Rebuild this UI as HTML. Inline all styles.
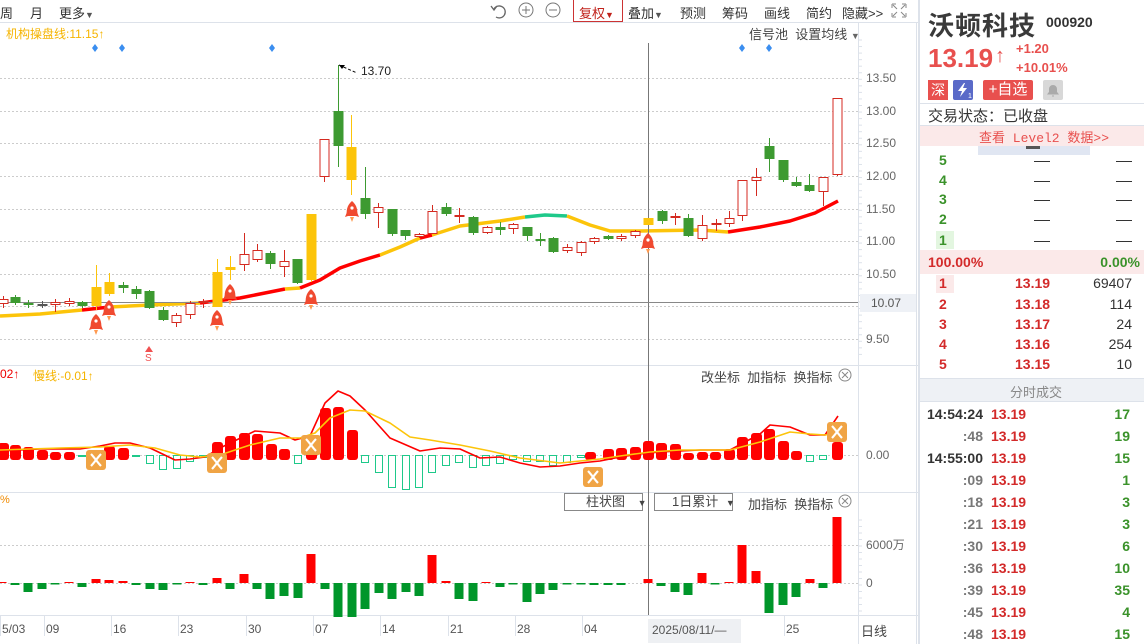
<!DOCTYPE html>
<html><head><meta charset="utf-8">
<style>
*{margin:0;padding:0;box-sizing:border-box}
body{width:1144px;height:644px;overflow:hidden;background:#fff;font-family:"Liberation Sans","Noto Sans CJK SC",sans-serif;position:relative;color:#333}
.a{position:absolute;white-space:nowrap}
.tb{font-size:13px;color:#333}
.rp .r{color:#d32a2a}.rp .g{color:#3a922a}
</style></head><body>
<svg id="s" class="a" style="left:0;top:0" width="920" height="644" xmlns="http://www.w3.org/2000/svg" font-family="Liberation Sans, Noto Sans CJK SC, sans-serif"></svg>

<div class="a" style="left:0;top:0;width:918px;height:23px;border-bottom:1px solid #dde2ea"></div>
<div class="a tb" style="left:0;top:3px">周</div>
<div class="a tb" style="left:30px;top:3px">月</div>
<div class="a tb" style="left:59px;top:3px">更多<span style="font-size:9px;color:#555">▼</span></div>
<div class="a" style="left:573px;top:0;width:50px;height:22px;border:1px solid #c33;border-top:none"></div>
<div class="a tb" style="left:579px;top:3px;color:#c0211a">复权<span style="font-size:9px">▼</span></div>
<div class="a tb" style="left:628px;top:3px">叠加<span style="font-size:9px;color:#555">▼</span></div>
<div class="a tb" style="left:680px;top:3px">预测</div>
<div class="a tb" style="left:722px;top:3px">筹码</div>
<div class="a tb" style="left:764px;top:3px">画线</div>
<div class="a tb" style="left:806px;top:3px">简约</div>
<div class="a tb" style="left:842px;top:3px">隐藏&gt;&gt;</div>

<div class="a" style="left:6px;top:25px;font-size:12px;color:#f5b400">机构操盘线:11.15↑</div>
<div class="a" style="left:749px;top:24px;font-size:13px;color:#444">信号池&nbsp; 设置均线 <span style="font-size:9px;color:#666">▼</span></div>

<div class="a" style="left:0;top:367px;font-size:12px;color:#e00">02↑</div>
<div class="a" style="left:33px;top:367px;font-size:12px;color:#f5b400">慢线:-0.01↑</div>
<div class="a" style="left:701px;top:367px;font-size:13px;color:#444">改坐标&nbsp; 加指标&nbsp; 换指标</div>
<div class="a" style="left:0;top:494px;font-size:11px;color:#f08a00">%</div>
<div class="a" style="left:564px;top:493px;width:79px;height:18px;border:1px solid #888;font-size:13px;color:#444;padding-left:21px;line-height:16px">柱状图 <span style="font-size:9px;margin-left:9px">▼</span></div>
<div class="a" style="left:654px;top:493px;width:79px;height:18px;border:1px solid #888;font-size:13px;color:#444;padding-left:17px;line-height:16px">1日累计 <span style="font-size:9px;margin-left:4px">▼</span></div>
<div class="a" style="left:748px;top:494px;font-size:13px;color:#444">加指标&nbsp; 换指标</div>
<div class="a" style="left:648px;top:619px;width:93px;height:24px;background:#eef0f3"></div>
<div class="a" style="left:652px;top:623px;font-size:12px;color:#555">2025/08/11/—</div>
<div class="a" style="left:861px;top:621px;font-size:13px;color:#444">日线</div>

<div class="a" style="left:918px;top:0;width:2px;height:644px;background:#dde2ea"></div>
<div class="a" style="left:928px;top:6px;font-size:26px;font-weight:bold;color:#3a3a3a;letter-spacing:1px">沃顿科技</div>
<div class="a" style="left:1046px;top:14px;font-size:14px;font-weight:bold;color:#333">000920</div>
<div class="a" style="left:928px;top:43px;font-size:26px;font-weight:bold;color:#e8504e">13.19</div>
<div class="a" style="left:995px;top:45px;font-size:20px;font-weight:bold;color:#e8504e">↑</div>
<div class="a" style="left:1016px;top:41px;font-size:13px;font-weight:bold;color:#e8504e">+1.20</div>
<div class="a" style="left:1016px;top:60px;font-size:13px;font-weight:bold;color:#e8504e">+10.01%</div>
<div class="a" style="left:928px;top:80px;width:20px;height:20px;background:#e8504e;color:#fff;font-size:14px;text-align:center;line-height:20px">深</div>
<div class="a" style="left:953px;top:80px;width:20px;height:20px;background:#5a6ac8;border-radius:2px"><svg width="20" height="20"><path d="M11 3L5 11h4l-2 6 7-9h-4l2-5z" fill="#fff"/><text x="15" y="18" font-size="7" fill="#fff">1</text></svg></div>
<div class="a" style="left:983px;top:80px;width:50px;height:20px;background:#e8504e;color:#fff;font-size:15px;text-align:center;line-height:20px;border-radius:2px">+自选</div>
<div class="a" style="left:1043px;top:80px;width:20px;height:20px;background:#d8d8d8;border-radius:2px"><svg width="20" height="20"><path d="M5 14h10l-1.5-2V9a3.5 3.5 0 0 0-7 0v3z M9 16h2" fill="#aaa" stroke="#aaa"/></svg></div>
<div class="a" style="left:920px;top:103px;width:224px;height:1px;background:#dde2ea"></div>
<div class="a" style="left:928px;top:105px;font-size:15px;color:#333">交易状态：已收盘</div>
<div class="a" style="left:920px;top:125px;width:224px;height:21px;background:#fbe9e9;border-top:1px solid #dde2ea"></div>
<div class="a" style="left:979px;top:127px;font-size:13px;color:#e8504e;font-family:'Liberation Mono','Noto Sans CJK SC',monospace">查看 Level2 数据&gt;&gt;</div>
<div class="a" style="left:978px;top:146px;width:112px;height:9px;background:#e0e6f2"></div>
<div class="a" style="left:1026px;top:146px;width:14px;height:3px;background:#555"></div>
<div class="a" style="left:936px;top:231px;width:18px;height:18px;background:#e3f6e0"></div>
<div class="a" style="left:920px;top:250px;width:224px;height:24px;background:#fbe9e9"></div>
<div class="a" style="left:936px;top:275px;width:18px;height:18px;background:#fbe9e9"></div>
<div class="a" style="left:920px;top:378px;width:224px;height:24px;background:#eef1f5;border-top:1px solid #dde2ea;border-bottom:1px solid #dde2ea"></div>
<div class="a" style="left:1010px;top:382px;font-size:13px;color:#888">分时成交</div>
<div id="rp" class="a rp" style="left:0;top:0;width:1144px;height:644px;font-size:14px;font-weight:bold"></div>

<script>
var S=document.getElementById('s'),h='';
function L(x1,y1,x2,y2,c,w,d){h+='<line x1="'+x1+'" y1="'+y1+'" x2="'+x2+'" y2="'+y2+'" stroke="'+c+'" stroke-width="'+(w||1)+'"'+(d?' stroke-dasharray="'+d+'"':'')+'/>';}
function R(x,y,w,hh,f,s,rx){h+='<rect x="'+x+'" y="'+y+'" width="'+w+'" height="'+hh+'" fill="'+f+'"'+(s?' stroke="'+s+'"':'')+(rx?' rx="'+rx+'"':'')+'/>';}
function T(x,y,t,c,sz,a){h+='<text x="'+x+'" y="'+y+'" fill="'+c+'" font-size="'+sz+'"'+(a?' text-anchor="'+a+'"':'')+'>'+t+'</text>';}
[78,111,143,176,209,241,274,306,339].forEach(function(y){L(0,y+.5,858,y+.5,'#ccc',1,'2,2')});
[545,583].forEach(function(y){L(0,y+.5,858,y+.5,'#ccc',1,'2,2')});
L(0,455.5,858,455.5,'#ccc',1,'2,2');
L(0,365.5,918,365.5,'#dde2ea');L(0,492.5,918,492.5,'#dde2ea');L(0,615.5,918,615.5,'#dde2ea');
L(858.5,23,858.5,644,'#dde2ea');L(916.5,23,916.5,644,'#dde2ea');
for(var y=40;y<360;y+=6.55)L(858,y,862,y,'#dde2ea');
for(var y=520;y<612;y+=6.5)L(858,y,862,y,'#dde2ea');
[['13.50',78],['13.00',111],['12.50',143],['12.00',176],['11.50',209],['11.00',241],['10.50',274],['9.50',339]].forEach(function(a){T(866,a[1]+4,a[0],'#666',12)});
T(866,459,'0.00','#666',12);T(866,549,'6000万','#666',12);T(866,587,'0','#666',12);
R(860,294,56,18,'#eef1f6');T(871,307,'10.07','#555',12);
[[0,'5/03'],[44,'09'],[111,'16'],[178,'23'],[246,'30'],[313,'07'],[380,'14'],[448,'21'],[515,'28'],[582,'04'],[784,'25']].forEach(function(a){L(a[0]+.5,616,a[0]+.5,636,'#dde2ea');T(a[0]+2,633,a[1],'#555',12)});
[95,122,272,742,769].forEach(function(x){h+='<path d="M'+x+' 44l3 4-3 4-3-4z" fill="#3a8ef0"/>'});
h+='<path d="M494 9a6 6 0 1 1 2 8" fill="none" stroke="#666" stroke-width="1.3"/><path d="M491 6l3 4 3-4" fill="none" stroke="#666" stroke-width="1.3"/>';
h+='<circle cx="526" cy="10" r="7" fill="none" stroke="#777"/><path d="M522 10h8M526 6v8" stroke="#777"/>';
h+='<circle cx="553" cy="10" r="7" fill="none" stroke="#777"/><path d="M549 10h8" stroke="#777"/>';
h+='<path d="M892 4h4M892 4v4M906 4h-4M906 4v4M892 17h4M892 17v-4M906 17h-4M906 17v-4M893 5l4 4M905 5l-4 4M893 16l4-4M905 16l-4-4" stroke="#888" fill="none"/>';
[[845,375],[845,501]].forEach(function(p){h+='<circle cx="'+p[0]+'" cy="'+p[1]+'" r="6" fill="none" stroke="#888"/><path d="M'+(p[0]-3)+' '+(p[1]-3)+'l6 6M'+(p[0]+3)+' '+(p[1]-3)+'l-6 6" stroke="#888"/>'});
function PL(pts,c,w){h+='<polyline points="'+pts+'" fill="none" stroke="'+c+'" stroke-width="'+w+'" stroke-linejoin="round"/>';}
PL('0,316 40,314 82,310','#fcc40a',3.5);
PL('82,310 110,307','#f00',3.5);
PL('110,307 150,305 200,303','#fcc40a',3.5);
PL('200,303 240,298 285,289','#f00',3.5);
PL('285,289 300,288','#fcc40a',3.5);
PL('300,288 320,280 340,268 360,261 380,255','#f00',3.5);
PL('380,255 400,247 420,238','#fcc40a',3.5);
PL('420,238 432,235','#f00',3.5);
PL('432,235 460,226 500,221 525,217','#fcc40a',3.5);
PL('525,217 545,215 567,216','#1ec98a',3.5);
PL('567,216 590,225 610,231 640,231 700,230 728,232','#fcc40a',3.5);
PL('728,232 760,227 790,221 815,213 838,201','#f00',3.5);
L(648.5,43,648.5,615,'#777');L(0,302.5,858,302.5,'#888');
var C=[[3,299,304,296,308,'r'],[15,297,303,295,305,'g'],[28,303,305,300,308,'g'],[42,304,306,301,308,'k'],[55,302,305,299,312,'r'],[69,301,304,298,306,'r'],[82,302,306,301,308,'g'],[96,287,306,265,310,'y'],[109,282,294,273,296,'y'],[123,285,288,282,293,'g'],[136,289,294,286,299,'g'],[149,291,308,290,309,'g'],[163,310,320,307,321,'g'],[176,315,323,313,327,'r'],[190,303,315,301,319,'r'],[203,301,303,299,308,'r'],[217,272,307,259,307,'y'],[230,267,270,256,280,'y'],[244,254,265,233,271,'r'],[257,250,260,244,262,'r'],[270,253,264,251,269,'g'],[284,261,267,250,277,'r'],[297,259,283,259,284,'g'],[311,214,280,214,282,'y'],[324,139,177,139,182,'r'],[338,111,146,65,167,'g'],[351,147,180,115,195,'y'],[365,198,214,167,219,'g'],[378,207,213,203,228,'r'],[392,209,234,209,236,'g'],[405,230,236,230,240,'g'],[419,234,237,233,238,'r'],[432,211,234,205,234,'r'],[446,207,214,203,216,'g'],[459,215,217,208,223,'r'],[473,217,233,216,235,'g'],[487,227,233,226,234,'r'],[500,227,230,222,235,'g'],[513,224,229,223,234,'r'],[527,227,236,227,241,'g'],[540,239,241,233,246,'g'],[553,238,252,237,253,'g'],[567,247,251,244,253,'r'],[581,242,253,241,256,'r'],[594,238,242,237,244,'r'],[608,236,239,235,240,'g'],[621,236,239,234,241,'r'],[635,231,236,230,238,'r'],[648,218,225,218,225,'y'],[662,211,221,210,224,'g'],[675,216,218,213,225,'r'],[688,218,236,214,237,'g'],[702,225,239,215,241,'r'],[716,223,225,219,231,'r'],[729,218,224,211,227,'r'],[742,180,216,180,221,'r'],[756,177,181,168,196,'r'],[769,146,159,138,172,'g'],[783,160,180,160,182,'g'],[796,182,186,177,187,'g'],[809,185,191,174,192,'g'],[823,177,192,177,206,'r'],[837,98,175,98,176,'r']];
C.forEach(function(c){var x=c[0],col={r:'#d42a20',g:'#3d9a31',y:'#fcc40a',k:'#555'}[c[5]];
L(x+.5,c[3],x+.5,c[4],col);
var bh=Math.max(c[2]-c[1],1.5);
if(c[5]=='r')R(x-4,c[1]+.5,9,bh-1,'#fff',col);else R(x-4.5,c[1],10,bh,col);});
h+='<path d="M339 65l18 8" stroke="#000" stroke-dasharray="3,2"/><path d="M339 65l6 0-3 4z" fill="#000"/>';T(361,75,'13.70','#222',12);
function rocket(x,y){h+='<path d="M'+x+' '+(y-10)+'c5 4 6 10 5 15h-10c-1-5 0-11 5-15z" fill="#f04a30"/><path d="M'+(x-5)+' '+(y+1)+'l-2 5 3-1zM'+(x+5)+' '+(y+1)+'l2 5-3-1z" fill="#f04a30"/><circle cx="'+x+'" cy="'+(y-3)+'" r="1.6" fill="#fff"/><path d="M'+(x-2)+' '+(y+6)+'l2 5 2-5z" fill="#ff9a50"/>';}
[[96,324],[109,310],[217,320],[230,294],[311,299],[352,211],[648,243]].forEach(function(p){rocket(p[0],p[1])});
h+='<path d="M149 346l-4 6h8z" fill="#f05050"/>';T(145,361,'S','#f05050',10);
var M=[[3,443],[15,445],[28,447],[42,450],[55,452],[69,452],[82,456],[109,446],[123,448],[136,456],[150,463],[163,469],[177,468],[190,461],[203,457],[217,442],[230,436],[244,433],[257,434],[271,444],[284,449],[298,463],[311,440],[325,408],[338,407],[352,430],[365,462],[379,472],[392,487],[406,489],[419,487],[432,472],[446,465],[459,462],[473,467],[486,465],[500,463],[513,459],[527,461],[540,461],[553,465],[567,462],[581,457],[590,452],[608,449],[621,448],[635,447],[648,441],[661,443],[675,444],[688,453],[702,452],[715,452],[729,449],[742,437],[756,433],[769,429],[783,441],[796,451],[810,461],[823,459],[837,442]];
M.forEach(function(m){var x=m[0],y=m[1];if(y<455)R(x-5,y,11,460-y,'#f00',null,3);else R(x-3.5,455.5,7,y-455,'#fff','#1ec98a');});
PL('0,451 40,449 80,449 100,446 115,443 130,443 150,448 175,460 190,459 205,457 220,448 255,431 280,433 295,440 310,436 325,403 338,391 350,396 365,410 390,438 420,451 440,448 460,449 480,458 500,457 520,463 540,467 560,466 580,463 600,461 620,457 640,454 660,452 700,450 730,450 760,434 770,425 790,427 810,435 825,435 838,416','#f00',1.6);
PL('0,450 60,448 100,447 130,445 155,448 180,455 200,457 220,455 250,445 280,438 300,438 315,433 330,418 350,410 365,411 390,423 410,437 430,440 460,445 490,451 520,458 560,463 600,459 620,456 650,452 680,450 730,450 760,442 790,432 810,434 825,435 835,433','#fcc40a',1.6);
function xi(x,y){h+='<rect x="'+(x-10)+'" y="'+(y-10)+'" width="20" height="20" rx="3" fill="#f0a445"/><path d="M'+(x-5)+' '+(y-6)+'c3 3 7 9 10 12M'+(x+5)+' '+(y-6)+'c-3 3-7 9-10 12" stroke="#fff" stroke-width="2.2" fill="none"/>';}
[[96,460],[217,463],[311,445],[593,477],[837,432]].forEach(function(p){xi(p[0],p[1])});
var V=[[2,582],[15,585],[28,592],[42,589],[55,584],[69,582],[82,587],[96,579],[109,580],[123,581],[136,585],[150,589],[163,590],[177,584],[190,582],[203,585],[217,578],[230,589],[244,574],[257,589],[270,599],[284,596],[298,598],[311,554],[325,589],[338,617],[352,617],[365,609],[379,593],[392,599],[406,592],[419,596],[432,555],[446,581],[459,599],[473,601],[486,582],[500,587],[513,584],[527,602],[540,594],[553,590],[567,584],[581,584],[594,585],[608,585],[621,585],[648,579],[661,586],[675,592],[688,595],[702,573],[715,584],[729,582],[742,545],[756,571],[769,613],[783,605],[796,597],[810,579],[823,588],[837,517]];
V.forEach(function(v){var x=v[0],y=v[1];if(y<583)R(x-4.5,y,9,583-y,'#f00');else R(x-4.5,583,9,Math.max(y-583,1.5),'#00962a');});
S.innerHTML=h;
var r='';
function D(x,y,t,c,a){r+='<div class="a '+c+'" style="'+(a?'right:'+(1144-x)+'px':'left:'+x+'px')+';top:'+y+'px">'+t+'</div>';}
[['5',152],['4',172],['3',191],['2',211],['1',232]].forEach(function(a){D(939,a[1],a[0],'g');r+='<div class="a" style="left:1034px;top:'+(a[1]+9)+'px;width:16px;height:1px;background:#333"></div><div class="a" style="left:1116px;top:'+(a[1]+9)+'px;width:16px;height:1px;background:#333"></div>';});
D(928,254,'100.00%','r');D(1140,254,'0.00%','g',1);
[['1','13.19','69407',275],['2','13.18','114',296],['3','13.17','24',316],['4','13.16','254',336],['5','13.15','10',356]].forEach(function(a){D(939,a[3],a[0],'r');D(1015,a[3],a[1],'r');r+='<div class="a" style="right:12px;top:'+a[3]+'px;color:#333;font-weight:normal">'+a[2]+'</div>';});
[['14:54:24','17'],[':48','19'],['14:55:00','15'],[':09','1'],[':18','3'],[':21','3'],[':30','6'],[':36','10'],[':39','35'],[':45','4'],[':48','15']].forEach(function(a,i){var y=406+i*22;r+='<div class="a" style="right:161px;top:'+y+'px;color:'+(a[0].length>4?'#333':'#777')+'">'+a[0]+'</div>';D(991,y,'13.19','r');r+='<div class="a g" style="right:14px;top:'+y+'px">'+a[1]+'</div>';});
document.getElementById('rp').innerHTML=r;
</script>
</body></html>
